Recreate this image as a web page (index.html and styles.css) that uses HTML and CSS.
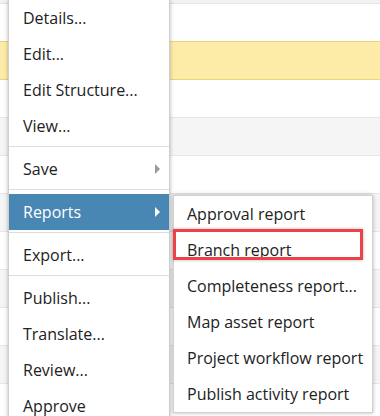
FILE: index.html
```html
<!DOCTYPE html>
<html>
<head>
<meta charset="utf-8">
<link rel="stylesheet" href="styles.css">
</head>
<body>
<div class="page">
  <div class="grid">
    <div class="strip"></div>
    <div class="row"></div>
    <div class="row selected"></div>
    <div class="row"></div>
    <div class="row alt"></div>
    <div class="row"></div>
    <div class="row alt"></div>
    <div class="row"></div>
    <div class="row alt"></div>
    <div class="row"></div>
    <div class="row alt"></div>
    <div class="row"></div>
  </div>

  <div class="menu">
    <div class="item">Details...</div>
    <div class="item">Edit...</div>
    <div class="item">Edit Structure...</div>
    <div class="item">View...</div>
    <div class="sep"></div>
    <div class="item sub"><span>Save</span><i class="arrow"></i></div>
    <div class="sep"></div>
    <div class="item sub active"><span>Reports</span><i class="arrow"></i>
      <div class="submenu">
        <div class="sitem">Approval report</div>
        <div class="sitem marked">Branch report<span class="callout"></span></div>
        <div class="sitem">Completeness report...</div>
        <div class="sitem">Map asset report</div>
        <div class="sitem">Project workflow report</div>
        <div class="sitem">Publish activity report</div>
      </div>
    </div>
    <div class="sep"></div>
    <div class="item">Export...</div>
    <div class="sep"></div>
    <div class="item">Publish...</div>
    <div class="item">Translate...</div>
    <div class="item">Review...</div>
    <div class="item">Approve</div>
  </div>
</div>
</body>
</html>
```

FILE: styles.css
```css
html, body {
  margin: 0;
  padding: 0;
  background: #ffffff;
}
.page {
  position: relative;
  width: 380px;
  height: 416px;
  overflow: hidden;
  font-family: "Open Sans", "Liberation Sans", sans-serif;
  font-size: 16px;
  color: #222222;
}
.grid {
  display: flex;
  flex-direction: column;
}
.strip {
  height: 3px;
  background: #f2f2f2;
  border-bottom: 1px solid #e4e4e4;
}
.row {
  height: 38px;
  box-sizing: border-box;
  border-bottom: 1px solid #e6e6e6;
  background: #ffffff;
}
.row.alt {
  background: #f5f5f5;
}
.row.selected {
  height: 39px;
  margin-top: -1px;
  background: #fdeba8;
  border-top: 1px solid #e9d57e;
  border-bottom: 1px solid #e9d57e;
}
.menu {
  position: absolute;
  left: 8px;
  top: 0;
  width: 160px;
  background: #ffffff;
  border: 1px solid #cfcfcf;
  border-top: none;
  box-shadow: 0 0 4px rgba(0, 0, 0, 0.28);
}
.item {
  position: relative;
  height: 36px;
  line-height: 36px;
  padding-left: 14px;
  padding-right: 9px;
  display: flex;
  align-items: center;
  justify-content: space-between;
  white-space: nowrap;
}
.item.active {
  background: #4886b4;
  color: #ffffff;
}
.arrow {
  width: 0;
  height: 0;
  border-left: 5px solid #9a9a9a;
  border-top: 5px solid transparent;
  border-bottom: 5px solid transparent;
}
.item.active .arrow {
  border-left-color: #ffffff;
}
.sep {
  height: 1px;
  background: #dddddd;
  margin: 2px 0 4px;
}
.submenu {
  position: absolute;
  left: 164px;
  top: 1px;
  width: 200px;
  background: #ffffff;
  color: #222222;
  border: 1px solid #d2d2d2;
  box-sizing: border-box;
  box-shadow: 0 0 4px rgba(0, 0, 0, 0.28);
}
.sitem {
  position: relative;
  height: 36px;
  line-height: 36px;
  padding-left: 13px;
  white-space: nowrap;
}
.callout {
  position: absolute;
  left: -1px;
  top: -3px;
  width: 190px;
  height: 31px;
  box-sizing: border-box;
  border: 3px solid #ec4348;
  box-shadow: 0 0 3px rgba(0, 0, 0, 0.3);
}
```
